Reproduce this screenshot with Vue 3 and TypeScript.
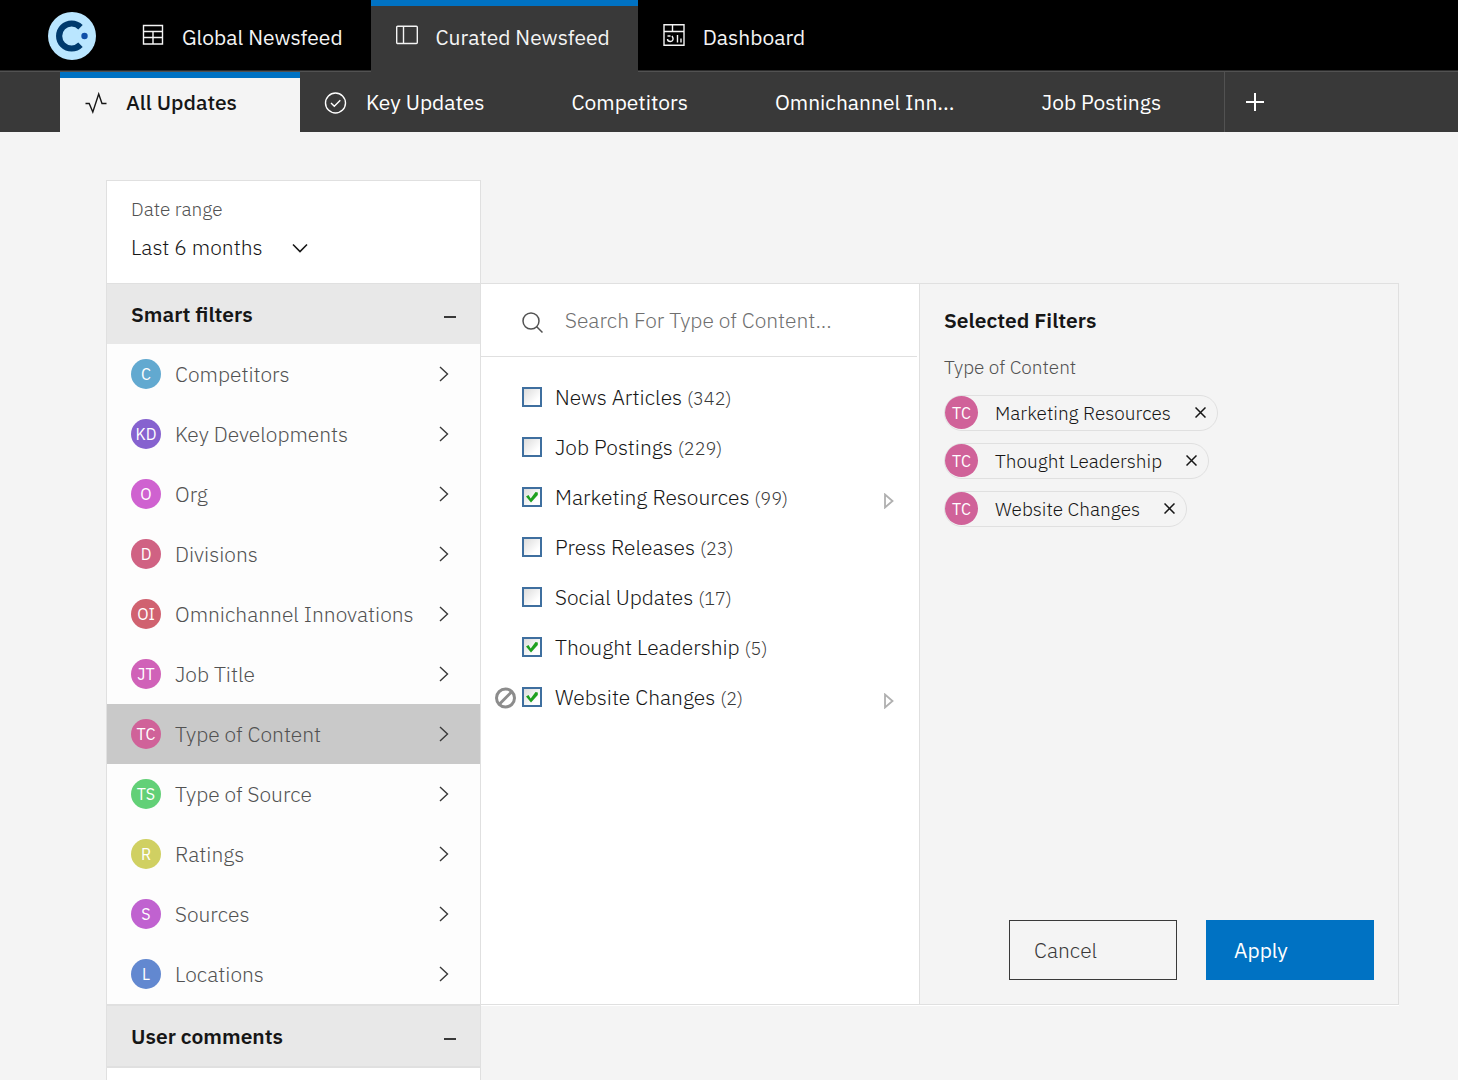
<script setup lang="ts">
import { ref, computed } from 'vue'

interface Filter { code: string; label: string; color: string }
interface Option { label: string; count: number; expandable?: boolean; excludable?: boolean }

const filters: Filter[] = [
  { code: 'C', label: 'Competitors', color: '#62a9d0' },
  { code: 'KD', label: 'Key Developments', color: '#8662cf' },
  { code: 'O', label: 'Org', color: '#cf62d0' },
  { code: 'D', label: 'Divisions', color: '#d06283' },
  { code: 'OI', label: 'Omnichannel Innovations', color: '#d06270' },
  { code: 'JT', label: 'Job Title', color: '#d062b8' },
  { code: 'TC', label: 'Type of Content', color: '#d06299' },
  { code: 'TS', label: 'Type of Source', color: '#62d077' },
  { code: 'R', label: 'Ratings', color: '#d0d062' },
  { code: 'S', label: 'Sources', color: '#c062d0' },
  { code: 'L', label: 'Locations', color: '#6288d0' },
]
const active = ref('TC')

const options: Option[] = [
  { label: 'News Articles', count: 342 },
  { label: 'Job Postings', count: 229 },
  { label: 'Marketing Resources', count: 99, expandable: true },
  { label: 'Press Releases', count: 23 },
  { label: 'Social Updates', count: 17 },
  { label: 'Thought Leadership', count: 5 },
  { label: 'Website Changes', count: 2, expandable: true, excludable: true },
]
const selected = ref<string[]>(['Marketing Resources', 'Thought Leadership', 'Website Changes'])
const chips = computed(() => options.filter(o => selected.value.includes(o.label)))
const query = ref('')

function remove(label: string) {
  selected.value = selected.value.filter(l => l !== label)
}
</script>

<template>
  <div class="page">
    <header class="topbar">
      <a class="logo" href="#" aria-label="Home">
        <svg width="48" height="48" viewBox="0 0 48 48">
          <circle cx="24" cy="24" r="24" fill="#bae6ff" />
          <path d="M32.500 15.200A12.500 12.500 0 1 0 32.500 32.800" fill="none" stroke="#003a6d" stroke-width="6.200" />
          <circle cx="36.500" cy="24" r="3.200" fill="#0f4fa8" />
        </svg>
      </a>
      <nav class="primary" aria-label="Primary">
        <a href="#" class="ptab">
          <svg class="icon" width="22" height="22" viewBox="0 0 22 22">
            <path d="M1.500 1.500h19v18.500h-19zM1 7.500h20M1 13.500h20M11 7.500v12" />
          </svg>
          Global Newsfeed
        </a>
        <a href="#" class="ptab current">
          <svg class="icon" width="22" height="22" viewBox="0 0 22 22">
            <rect x=".7" y="2.200" width="20.600" height="17.300" rx="1" /><path d="M7.500 2.500v17" />
          </svg>
          Curated Newsfeed
        </a>
        <a href="#" class="ptab">
          <svg class="icon" width="22" height="22" viewBox="0 0 22 22">
            <path d="M1 .7h20v20.600H1zM1 7.500h20M9.500 1v6.500M4.500 12h3M9 12c2 3 1 5.500-1.500 5.500-2 0-3-1.200-3-2.500M14.500 11v7.500M18 14.500v4" />
          </svg>
          Dashboard
        </a>
      </nav>
    </header>

    <nav class="subbar" aria-label="Feeds">
      <a href="#" class="stab current">
        <svg class="icon" width="23" height="22" viewBox="0 0 23 22">
          <path d="M1.500 11.500h3.700l3.600 8.500L14.700 2l3.300 9.500h4.500" />
        </svg>
        All Updates
      </a>
      <a href="#" class="stab">
        <svg class="icon" width="23" height="22" viewBox="0 0 23 22">
          <circle cx="11.500" cy="11" r="10" /><path d="M7 11l3.300 3.300 6-6" />
        </svg>
        Key Updates
      </a>
      <a href="#" class="stab">Competitors</a>
      <a href="#" class="stab">Omnichannel Inn...</a>
      <a href="#" class="stab">Job Postings</a>
      <button class="add" type="button" aria-label="Add feed">
        <svg width="18" height="18" viewBox="0 0 18 18"><path d="M9 0v18M0 9h18" stroke="#fff" stroke-width="2" /></svg>
      </button>
    </nav>

    <main class="layout">
      <section class="date box">
        <label for="range">Date range</label>
        <div class="select">
          <select id="range"><option>Last 6 months</option></select>
          <svg width="16" height="16" viewBox="0 0 16 16"><path d="M1 4.500l7 7 7-7" /></svg>
        </div>
      </section>

      <section class="smart box">
        <h2 class="group">Smart filters
          <button type="button" class="minus" aria-label="Collapse smart filters"></button>
        </h2>
        <button
          v-for="f in filters" :key="f.code" type="button" class="filter"
          :class="{ on: f.code === active }" @click="active = f.code"
        >
          <span class="avatar" :style="{ background: f.color }">{{ f.code }}</span>
          <span class="name">{{ f.label }}</span>
          <svg width="10" height="16" viewBox="0 0 10 16"><path d="M1 1l7.500 7L1 15" /></svg>
        </button>
      </section>

      <section class="options">
        <div class="search">
          <svg width="22" height="22" viewBox="0 0 22 22"><circle cx="9" cy="9" r="8" /><path d="M14.500 14.500l6 6" /></svg>
          <input v-model="query" type="text" aria-label="Search" placeholder="Search For Type of Content...">
        </div>
        <ul class="list">
          <li v-for="o in options" :key="o.label">
            <span class="slot">
              <svg v-if="o.excludable" width="22" height="22" viewBox="0 0 22 22">
                <circle cx="10.500" cy="11" r="9" /><path d="M4.300 17.200L16.700 4.800" />
              </svg>
            </span>
            <label>
              <input v-model="selected" type="checkbox" :value="o.label">
              <span>{{ o.label }} <small>({{ o.count }})</small></span>
            </label>
            <button v-if="o.expandable" class="expand" type="button" :aria-label="`Expand ${o.label}`">
              <svg width="10" height="16" viewBox="0 0 10 16"><path d="M1 1.500v13L8.500 8z" /></svg>
            </button>
          </li>
        </ul>
      </section>

      <section class="chosen">
        <h2>Selected Filters</h2>
        <h3>Type of Content</h3>
        <ul class="chips">
          <li v-for="c in chips" :key="c.label" class="chip">
            <span class="avatar large tc">TC</span>
            <span>{{ c.label }}</span>
            <button type="button" :aria-label="`Remove ${c.label}`" @click="remove(c.label)">
              <svg width="11" height="11" viewBox="0 0 11 11"><path d="M.5.5l10 10M10.500.5l-10 10" /></svg>
            </button>
          </li>
        </ul>
        <div class="actions">
          <button type="button" class="cancel">Cancel</button>
          <button type="button" class="apply">Apply</button>
        </div>
      </section>

      <section class="comments box">
        <h2 class="group">User comments
          <button type="button" class="minus" aria-label="Collapse user comments"></button>
        </h2>
      </section>
    </main>
  </div>
</template>

<style>
body { margin: 0; background: #f4f4f4; }
</style>

<style scoped>
* { box-sizing: border-box; }
.page {
  height: 100vh;
  overflow: hidden;
  display: flex;
  flex-direction: column;
  background: #f4f4f4;
  color: #161616;
  font-family: "IBM Plex Sans", "Noto Sans", sans-serif;
  font-size: 21px;
  line-height: 28px;
  font-weight: 300;
}
a { color: inherit; text-decoration: none; }
button, input, select { font: inherit; color: inherit; border: 0; padding: 0; background: none; border-radius: 0; }
button { cursor: pointer; }
h2, h3, ul { margin: 0; padding: 0; font-size: inherit; list-style: none; }
svg { flex: none; display: block; fill: none; }
.icon { stroke: currentColor; stroke-width: 1.4; }

.topbar { display: flex; flex: none; height: 72px; background: linear-gradient(#000 70px, #2b2b2b 70px, #2b2b2b 71px, #525252 71px); }
.logo { padding: 12px 21px 12px 48px; }
.primary { display: flex; color: #f4f4f4; font-weight: 400; white-space: nowrap; }
.ptab { display: flex; align-items: center; gap: 18px; padding: 2px 28px 0 25px; }
.ptab .icon { margin-bottom: 4px; }
.ptab.current { background: #393939; box-shadow: inset 0 6px #0072c3; }

.subbar { display: flex; flex: none; height: 60px; padding-left: 60px; background: #393939; color: #fff; font-weight: 400; white-space: nowrap; }
.stab { display: flex; align-items: center; gap: 19px; padding: 0 63px 0 24px; }
.stab .icon { margin-top: 2px; }
.stab.current { background: #f4f4f4; color: #161616; font-weight: 500; box-shadow: inset 0 6px #0072c3; }
.add { width: 61px; border-left: 1px solid #525252; display: flex; align-items: center; justify-content: center; }

.layout {
  flex: 1;
  min-height: 0;
  display: grid;
  grid-template-columns: minmax(0, 375fr) minmax(0, 438fr) minmax(0, 480fr);
  grid-template-rows: auto auto 1fr;
  padding: 48px 59px 0 106px;
}
.box { grid-column: 1; background: #fff; border: 1px solid #e0e0e0; border-bottom: 0; }
.date { padding: 16px 24px 22px; }
.date label { display: block; font-size: 19px; line-height: 24px; color: #525252; }
.select { display: flex; align-items: center; gap: 29px; margin-top: 12px; }
.select select { appearance: none; height: 28px; }
.select svg { margin-top: 2px; stroke: #161616; stroke-width: 1.6; }

.group {
  display: flex;
  align-items: center;
  justify-content: space-between;
  height: 60px;
  padding: 0 24px;
  background: #e8e8e8;
  font-weight: 600;
}
.minus { width: 12px; height: 24px; background: linear-gradient(#393939, #393939) 0 14px / 12px 2px no-repeat; }
.smart { background: #fdfdfd; border-bottom: 1px solid #e0e0e0; }
.filter { display: flex; align-items: center; gap: 14px; width: 100%; height: 60px; padding: 0 31px 0 24px; color: #525252; text-align: left; white-space: nowrap; }
.filter.on { background: #c9c9c9; }
.name { flex: 1; }
.filter svg { stroke: #393939; stroke-width: 1.4; }
.avatar {
  display: flex;
  align-items: center;
  justify-content: center;
  flex: none;
  width: 30px;
  height: 30px;
  border-radius: 50%;
  color: #fff;
  font-size: 16px;
  font-weight: 400;
}
.avatar.large { width: 33px; height: 33px; }
.tc { background: #d06299; }

.options { grid-column: 2; grid-row: 2; background: #fff; border: solid #e0e0e0; border-width: 1px 0; box-shadow: 0 1px #fff; }
.search { display: flex; align-items: center; gap: 21px; height: 73px; margin-right: 2px; padding: 0 24px 0 41px; border-bottom: 1px solid #e0e0e0; }
.search svg { margin-top: 5px; stroke: #525252; stroke-width: 1.5; }
.search input { flex: 1; min-width: 0; outline: 0; }
.search input::placeholder { color: #6f6f6f; opacity: 1; }
.list { padding-top: 16px; }
.list li { display: flex; align-items: center; height: 50px; padding: 0 25px 0 14px; }
.list label { flex: 1; display: flex; align-items: center; gap: 13px; }
.slot { width: 27px; }
.slot svg { stroke: #8c8c8c; stroke-width: 3; }
.list small { font-size: 18px; color: #393939; }
.list input {
  appearance: none;
  flex: none;
  width: 20px;
  height: 20px;
  margin: 0 0 3px;
  border: 2px solid #3f6f9f;
  background: linear-gradient(135deg, #dcdcdc, #fff 75%);
}
.list input:checked {
  background: url("data:image/svg+xml,%3Csvg xmlns='http://www.w3.org/2000/svg' viewBox='0 0 16 16'%3E%3Cpath d='M2 7.500L4.500 6l2.200 3.500L11.500 3l2.300.5v2.500L7 13.500z' fill='%231ea01e'/%3E%3C/svg%3E") center / 16px, linear-gradient(135deg, #dcdcdc, #fff 75%);
}
.expand { margin-top: 5px; }
.expand svg { stroke: #b0b0b0; stroke-width: 1.8; }

.chosen {
  grid-column: 3;
  grid-row: 2;
  display: flex;
  flex-direction: column;
  padding: 22px 24px 24px;
  border: 1px solid #e0e0e0;
  box-shadow: 0 1px #fff;
}
.chosen h2 { font-weight: 600; }
.chosen h3 { margin-top: 21px; font-size: 19px; line-height: 24px; font-weight: 300; color: #525252; }
.chips { display: flex; flex-direction: column; align-items: flex-start; gap: 12px; margin-top: 16px; }
.chip { display: flex; align-items: center; height: 36px; padding: 0 11px 1px 0; border: 1px solid #e0e0e0; border-radius: 18px; font-size: 19px; white-space: nowrap; }
.chip .avatar { margin-right: 17px; }
.chip button { margin-left: 24px; }
.chip svg { stroke: #161616; stroke-width: 1.5; }
.actions { display: flex; justify-content: flex-end; gap: 29px; margin-top: auto; }
.actions button { width: 168px; height: 60px; padding: 0 24px; text-align: left; }
.cancel { border: 1px solid #393939; color: #393939; }
.actions .apply { padding: 0 28px; background: #0072c3; color: #fff; font-weight: 400; }

.comments { grid-row: 3; }
.comments .group { height: 62px; border-bottom: 2px solid #e0e0e0; }
</style>
